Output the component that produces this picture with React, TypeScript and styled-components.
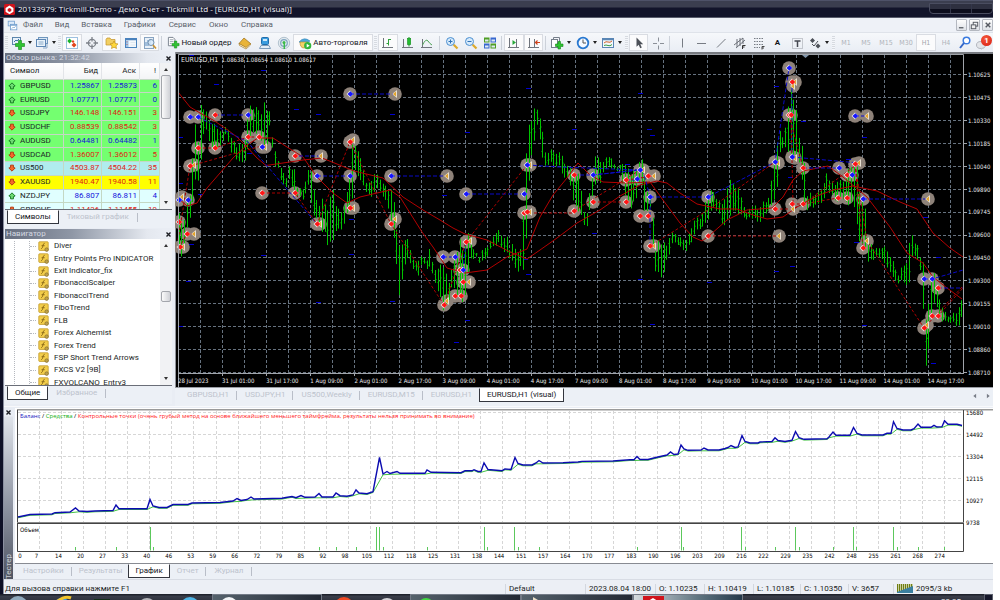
import React from "react";
import styled, { createGlobalStyle } from "styled-components";

const UI = `Roboto, "Open Sans", sans-serif`;
const TITLE = `"Open Sans", "Noto Sans", sans-serif`;
const SMALL = `"DejaVu Sans Condensed", "DejaVu Sans", sans-serif`;

const GlobalStyle = createGlobalStyle`
  * { box-sizing: border-box; }
  body { margin: 0; background: #fff; font-family: ${UI}; font-size: 8px; line-height: 10px; color: #1c1f26; }
  button, input { font: inherit; color: inherit; }
  button { border: 0; background: none; padding: 0; margin: 0; white-space: nowrap; }
  svg { display: block; }
`;

const Desktop = styled.div`
  display: flex;
  flex-direction: column;
  height: 100vh;
  overflow: hidden;
  padding-right: 7px;
`;

/* ---------- window frame ---------- */
const TitleBar = styled.header`
  display: flex;
  flex: none;
  align-items: center;
  justify-content: space-between;
  height: 18px;
  padding-left: 4px;
  background: linear-gradient(#4e5268 0 1px, #3b3e4f 1px 7px, #12142a 8px 17px, #585c6c 17px);
`;
const Caption = styled.h1`
  display: flex;
  align-items: center;
  gap: 3px;
  margin: 0;
  font-family: ${TITLE};
  font-size: 8px;
  font-weight: 400;
  color: #f2f3f7;
`;
const FrameButtons = styled.div`
  display: flex;
  width: 64px;
  height: 11px;
  margin-bottom: 2px;
  border: 1px solid #4a4d60;
  border-radius: 0 0 4px 4px;
  background: linear-gradient(#2e3040 0 5px, #0c0d1c 5px);
  overflow: hidden;
`;
const FrameButton = styled.button`
  flex: 1;
  border-right: 1px solid #33364a;
  &:last-child { border-right: 0; }
`;
const Frame = styled.div`
  display: flex;
  flex: none;
  flex-direction: column;
  padding-left: 4px;
  background: linear-gradient(90deg, #0e1026 0 3px, #8a8fa0 3px 4px, #e9edf4 4px);
`;
const MenuBar = styled.nav`
  display: flex;
  align-items: center;
  height: 14px;
  padding-left: 3px;
  background: #eef1f7;
`;
const MenuButton = styled.button<{ $gap?: number }>`
  margin-left: ${(p) => p.$gap ?? 12}px;
  color: #5a5f6a;
`;
const MdiButtons = styled.div`
  display: flex;
  gap: 2px;
  margin-left: auto;
`;
const MdiButton = styled.button`
  display: grid;
  place-items: center;
  width: 11px;
  height: 12px;
  border: 1px solid #b4b8c0;
  border-radius: 1px;
  background: linear-gradient(#fdfdfd, #dfe2e8);
`;

/* ---------- toolbar ---------- */
const Toolbar = styled.div`
  display: flex;
  align-items: center;
  height: 20px;
  border-top: 1px solid #dfe3ea;
  background: linear-gradient(#f6f8fb, #e9edf4);
  overflow: hidden;
`;
const Grip = styled.span`
  flex: none;
  width: 3px;
  height: 14px;
  margin: 0 1px;
  background: repeating-linear-gradient(#d6dae0 0 1px, #f4f6fa 1px 2px);
`;
const Rule = styled.span`
  flex: none;
  width: 1px;
  height: 14px;
  margin: 0 2px;
  background: #ccd1d9;
`;
const Tool = styled.button<{ $on?: boolean; $w?: number }>`
  display: flex;
  flex: none;
  align-items: center;
  justify-content: center;
  gap: 1px;
  width: ${(p) => p.$w ?? 19}px;
  height: 17px;
  border: 1px solid ${(p) => (p.$on ? "#d9dce2" : "transparent")};
  background: ${(p) => (p.$on ? "#fbfbfc" : "transparent")};
  color: ${(p) => (p.$on ? "#a3a5aa" : "#aeb2b9")};
`;
const TextTool = styled(Tool)`
  color: #14161c;
`;
const PeriodTool = styled(Tool)`
  font-family: ${SMALL};
  font-size: 7px;
`;
const Arrow = styled.span`
  flex: none;
  border: 2px solid transparent;
  border-top: 3px solid #222;
  border-bottom: 0;
  margin-left: 2px;
`;
const Notice = styled.button`
  position: relative;
  flex: none;
  width: 18px;
  height: 17px;
  margin-left: auto;
`;
const NoticeBadge = styled.span`
  position: absolute;
  top: 1px;
  right: 1px;
  width: 11px;
  height: 11px;
  border-radius: 50%;
  background: radial-gradient(circle at 40% 30%, #f4583c, #d81e12);
  color: #fff;
  font-weight: 700;
  line-height: 11px;
  text-align: center;
`;

/* ---------- docked panels ---------- */
const Work = styled.div`
  display: flex;
  align-items: flex-start;
`;
const Dock = styled.aside`
  flex: none;
  width: 168px;
  margin-right: 3px;
  padding-left: 1px;
`;
const PanelTitle = styled.div`
  display: flex;
  align-items: center;
  justify-content: space-between;
  height: 10px;
  margin-top: 1px;
  color: #d5d9e2;
  background: linear-gradient(90deg, #666e7f, #8f97a6 40%, #e4e8ef 85%, #e9edf4 95%);
`;
const PanelHeading = styled.h2`
  margin: 0 0 0 1px;
  font-size: 8px;
  font-weight: 400;
  line-height: 10px;
`;
const Close = styled.button`
  display: grid;
  place-items: center;
  width: 8px;
  height: 8px;
`;
const PanelBody = styled.div<{ $h: number }>`
  display: flex;
  align-items: stretch;
  height: ${(p) => p.$h}px;
  background: #fff;
  border-bottom: 1px solid #6a6e78;
  overflow: hidden;
`;
const Quotes = styled.table`
  flex: 1;
  height: 154px;
  border-collapse: collapse;
  table-layout: fixed;
`;
const HeadCell = styled.th<{ $w: number; $left?: boolean }>`
  width: ${(p) => p.$w}px;
  height: 16px;
  padding: 0 3px 0 5px;
  font-weight: 400;
  text-align: ${(p) => (p.$left ? "left" : "right")};
  border-right: 1px solid #e2e4e8;
  background: linear-gradient(#fff, #f3f4f6);
`;
const QuoteRow = styled.tr<{ $bg: string }>`
  background: ${(p) => p.$bg};
`;
const SymbolCell = styled.td`
  padding: 0 0 0 3px;
  border: 1px solid #c4d8c4;
  border-left: 0;
`;
const SymbolLabel = styled.span`
  display: flex;
  align-items: center;
  gap: 4px;
`;
const PriceCell = styled.td<{ $up: boolean }>`
  padding: 0 2px;
  border: 1px solid #c4d8c4;
  text-align: right;
  color: ${(p) => (p.$up ? "#1414dc" : "#e01c14")};
`;
const ScrollTrack = styled.div`
  display: flex;
  flex: none;
  flex-direction: column;
  align-items: center;
  width: 12px;
  padding: 5px 1px;
  background: #f1f2f4;
`;
const ScrollArrow = styled.span<{ $down?: boolean }>`
  border: 2px solid transparent;
  ${(p) => (p.$down ? "border-top: 3px solid #333; border-bottom: 0;" : "border-bottom: 3px solid #333; border-top: 0;")}
`;
const ScrollThumb = styled.span<{ $top: number; $h: number }>`
  width: 10px;
  height: ${(p) => p.$h}px;
  margin: ${(p) => p.$top}px 0 auto;
  border: 1px solid #a3a6ac;
  border-radius: 2px;
  background: linear-gradient(90deg, #fbfbfb, #cfd1d6);
`;
const Tabs = styled.div<{ $pad?: number; $h?: number }>`
  display: flex;
  align-items: flex-start;
  height: ${(p) => p.$h ?? 18}px;
  padding-left: ${(p) => p.$pad ?? 2}px;
  background: #ecf0f6;
`;
const Tab = styled.button<{ $on?: boolean; $pad?: number }>`
  height: 14px;
  padding: 0 ${(p) => p.$pad ?? 7}px;
  border: 1px solid ${(p) => (p.$on ? "#33363e" : "transparent")};
  border-top-color: transparent;
  background: ${(p) => (p.$on ? "#fff" : "transparent")};
  color: ${(p) => (p.$on ? "#14161c" : "#bdc3cd")};
`;
const TabRule = styled.span`
  width: 1px;
  height: 9px;
  margin: 3px 1px 0 0;
  background: #b9bec8;
`;
const Tree = styled.ul`
  display: grid;
  grid-auto-rows: 1fr;
  flex: 1;
  height: 149px;
  margin: 1px 0 0;
  padding: 0 0 0 9px;
  list-style: none;
  background: repeating-linear-gradient(#fff 0 1px, transparent 1px 2px), linear-gradient(90deg, transparent 9px, #b5b8be 9px 10px, transparent 10px 24px, #b5b8be 24px 25px, transparent 25px);
`;
const TreeItem = styled.li`
  display: flex;
  align-items: center;
  gap: 5px;
  padding-left: 16px;
  white-space: nowrap;
`;
const TreeTwig = styled.span`
  width: 6px;
  margin-right: -3px;
  border-top: 1px dotted #b5b8be;
`;

/* ---------- chart window ---------- */
const ChartColumn = styled.section`
  flex: 1;
  min-width: 0;
`;
const Plot = styled.svg`
  width: 100%;
  height: auto;
  font-family: ${SMALL};
  font-size: 6px;
`;
const Legend = styled.text`
  font-family: ${TITLE};
  font-size: 6px;
`;
const TabScroll = styled.div`
  display: flex;
  gap: 5px;
  margin: 4px 1px 0 auto;
`;

/* ---------- tester ---------- */
const Tester = styled.section`
  display: flex;
  border-top: 1px solid #f8f9fb;
  padding-top: 1px;
`;
const TesterRail = styled.div`
  display: flex;
  flex: none;
  flex-direction: column;
  align-items: center;
  justify-content: space-between;
  width: 9px;
  margin-right: 2px;
  background: linear-gradient(#e9edf4 8px, #dfe3ea 9px, #8a909e 60%, #4e5462);
`;
const RailName = styled.span`
  writing-mode: vertical-rl;
  transform: rotate(180deg);
  color: #c9cdd6;
  line-height: 9px;
`;
const TesterMain = styled.div`
  flex: 1;
  min-width: 0;
`;
const StatusBar = styled.footer`
  display: flex;
  align-items: center;
  height: 15px;
  padding: 4px 0 0 1px;
  border-top: 1px solid #d8dce4;
  background: #eceff5;
`;
const StatusHelp = styled.span`
  flex: 1;
  white-space: nowrap;
`;
const StatusItem = styled.span<{ $w: number }>`
  flex: none;
  display: flex;
  gap: 3px;
  width: ${(p) => p.$w}px;
  padding-left: 3px;
  border-left: 1px solid #d3d7de;
  white-space: nowrap;
`;

/* ---------- task bar ---------- */
const TaskBar = styled.div`
  display: flex;
  flex: 1;
  min-height: 7px;
  overflow: hidden;
  background: linear-gradient(#1f222c 0 1px, #3a3e4a 2px, #2f323d);
`;
const Task = styled.button<{ $w: number; $open?: boolean; $lit?: boolean }>`
  flex: none;
  width: ${(p) => p.$w}px;
  height: 20px;
  padding: 1px 0 0 ${(p) => (p.$open ? 8 : 0)}px;
  border: ${(p) => (p.$open ? "1px solid #737a86" : "0")};
  background: ${(p) => (p.$lit ? "linear-gradient(90deg, #d5dade, #5f7480 60%, #25394a)" : p.$open ? "linear-gradient(90deg, #55626c, #232833)" : "transparent")};
`;
const Clock = styled.span`
  margin: 3px 23px 0 auto;
  color: #e8eaef;
`;
const ShowDesktop = styled.button`
  width: 9px;
  height: 20px;
  border: 1px solid #5b5f6c;
  background: #15172a;
`;

/* ---------- icons ---------- */
const glyphs: Record<string, React.ReactNode> = {
  newChart: <><rect x="1.5" y="1.5" width="8" height="7" fill="#e7f1fa" stroke="#5d86ad" /><path d="M3 6l2-2 1 1 2-2" stroke="#3e73a8" fill="none" /><path d="M7.500 4.500h3V7.500h3v3h-3v3h-3v-3h-3v-3h3z" fill="#2fc431" stroke="#128817" strokeWidth=".6" /></>,
  profiles: <><rect x="3.500" y="1.500" width="9" height="6" fill="#d9e8f6" stroke="#6f96bd" /><rect x="1.500" y="3.500" width="9" height="7" fill="#e9f3fb" stroke="#5d86b4" /><path d="M3.500 6h5M3.500 8h5M8 12h4v-4" stroke="#8aa9c8" fill="none" /></>,
  market: <><rect x="1.500" y="1.500" width="11" height="11" fill="#fff" stroke="#9cc0e0" /><path d="M4.500 2.500L7 5 4.500 7.500 2.300 5z" fill="#19b32a" /><path d="M9 6.500L11.500 9 9 11.500 6.500 9zM8 4l1.500 1.500L8 7 6.500 5.500z" fill="#e2451c" /></>,
  cross: <g fill="none" stroke="#7d828a"><circle cx="7" cy="7" r="3.700" strokeWidth="1.200" /><path d="M7 1v4.500M7 8.500v4.500M1 7h4.500M8.500 7h4.500" strokeWidth="1.300" /></g>,
  nav: <><path d="M1 3.500L2 2h3l1 1.500h4V9H1z" fill="#f2cf62" stroke="#c2922a" strokeWidth=".7" /><path d="M9 5l1.300 2.500 2.700.4-2 1.900.5 2.700L9 11.200l-2.500 1.300.5-2.700-2-1.900 2.700-.4z" fill="#ffd83c" stroke="#b88713" strokeWidth=".6" /></>,
  terminal: <><rect x="1.500" y="2.500" width="11" height="9" fill="#f4f8fc" stroke="#4a82bd" /><path d="M1.500 3.500h11" stroke="#4a82bd" strokeWidth="1.500" /><path d="M2 4.500h2.500v6.500H2z" fill="#9cc4ea" /><path d="M3 5.500v.8M3 8v.8" stroke="#d04a3a" /><path d="M6.500 6.500h5M6.500 9h5" stroke="#dfe8f0" /></>,
  tester: <><rect x="1.500" y="1.500" width="9" height="11" fill="#e8f0f8" stroke="#88a4c2" /><path d="M3 10V6M5 10V4M7 8V3" stroke="#5b8dc0" /><circle cx="8" cy="6.500" r="3" fill="#d8ebfb" fillOpacity=".8" stroke="#7390ad" /><path d="M10 9l3 3.500" stroke="#cc9432" strokeWidth="1.700" /></>,
  order: <><path d="M1.500 1.500h5l2 2v7h-7z" fill="#fff" stroke="#767f8b" /><path d="M3 4h4M3 6h4M3 8h2" stroke="#9aa3ad" /><path d="M8 5.500h2.500V8H13v2.500h-2.500V13H8v-2.500H5.500V8H8z" fill="#2fc431" stroke="#128817" strokeWidth=".6" /></>,
  book: <><path d="M1 7.500L6 2l6.500 5.500L8 12z" fill="#e9b43a" stroke="#9a6b12" strokeWidth=".7" /><path d="M1 7.500L1.500 9.500 8 13l4.500-4v-1.500L8 11.500z" fill="#fff3cc" stroke="#9a6b12" strokeWidth=".6" /></>,
  vps: <><rect x="3.500" y="1.500" width="7" height="7" rx="1" fill="#3a9de0" stroke="#1f6cab" /><path d="M5 3h4v2H5z" fill="#cfe8f8" /><path d="M1.500 12.500L3 9.500h8l1.500 3z" fill="#e3edf6" stroke="#7d9cbb" /></>,
  signal: <><circle cx="7" cy="7" r="5.700" fill="#e2eaf0" stroke="#b2c2ce" /><circle cx="7" cy="7" r="3.300" fill="none" stroke="#7fa5c0" strokeWidth="1.200" /><circle cx="7" cy="6.500" r="1.500" fill="#3cba4a" /><path d="M7.300 7v6" stroke="#3cba4a" strokeWidth="1.500" /></>,
  auto: <><path d="M1 6Q6 0 12 5L7 8z" fill="#4ba9dc" stroke="#2a77aa" strokeWidth=".5" /><path d="M2 6h8q0 6-4 6T2 6z" fill="#f3d268" stroke="#af8424" strokeWidth=".6" /><circle cx="9.700" cy="9.700" r="3.600" fill="#32b53c" /><path d="M8.700 7.800v3.800l3-1.900z" fill="#fff" /></>,
  bars: <><path d="M2.500 2v10M1 11.500h11" stroke="#70757d" fill="none" /><path d="M5.500 7.500h2V3M7.500 3.500H10M7.500 5v4.500" stroke="#2fa13a" fill="none" /></>,
  candles: <><path d="M2.500 3v9M1 11.500h11" stroke="#70757d" fill="none" /><path d="M8 1v9.500" stroke="#15911f" /><rect x="6.500" y="2.500" width="3.200" height="6" fill="#22bd30" stroke="#15911f" strokeWidth=".6" /></>,
  line: <><path d="M2.500 3v9M1 11.500h11" stroke="#70757d" fill="none" /><path d="M2.500 9Q6 2 8 5t4 4" stroke="#4fa657" fill="none" /></>,
  zoomIn: <><circle cx="5.500" cy="5.500" r="4" fill="#d5eafb" stroke="#4c8fd0" /><path d="M3.500 5.500h4M5.500 3.500v4" stroke="#2f72b8" /><path d="M8.700 8.700L12.500 12.500" stroke="#dcaa2c" strokeWidth="2.200" /></>,
  zoomOut: <><circle cx="5.500" cy="5.500" r="4" fill="#d5eafb" stroke="#4c8fd0" /><path d="M3.500 5.500h4" stroke="#2f72b8" /><path d="M8.700 8.700L12.500 12.500" stroke="#dcaa2c" strokeWidth="2.200" /></>,
  tile: <><path d="M1 1.500h5.500v5H1zM7.500 7.500H13v5H7.500z" fill="#4f9e24" /><path d="M7.500 1.500H13v5H7.500zM1 7.500h5.500v5H1z" fill="#3868cf" /><path d="M2 3.500h3.500v2H2zM8.500 3.500H12v2H8.500zM2 9.500h3.500v2H2zM8.500 9.500H12v2H8.500z" fill="#dfeaf4" /></>,
  scroll: <><path d="M2.500 2v10M1 11.500h11M9.500 3v8" stroke="#70757d" fill="none" /><path d="M5.500 4l3.500 2.500L5.500 9z" fill="#27a838" /></>,
  shift: <><path d="M2.500 2v10M1 11.500h11M7.500 3v8" stroke="#70757d" fill="none" /><path d="M13 6.500H8.500M10.500 4.500l-2 2 2 2" stroke="#d0431c" fill="none" strokeWidth="1.200" /></>,
  indicators: <><rect x="1.500" y="3.500" width="6" height="8" fill="#fff" stroke="#767f8b" /><path d="M3.500 3.500v-2h6v7" stroke="#767f8b" fill="none" /><path d="M8 5.500h2.500V8H13v2.500h-2.500V13H8v-2.500H5.500V8H8z" fill="#2fc431" stroke="#128817" strokeWidth=".6" /></>,
  clock: <><circle cx="7" cy="7" r="5.300" fill="#f4f9ff" stroke="#2878d0" strokeWidth="1.800" /><path d="M7 3.500V7h3" stroke="#555" fill="none" /></>,
  template: <><rect x="1.500" y="2.500" width="11" height="9" fill="#f4f8fc" stroke="#5a86b5" /><path d="M1.500 3.500h11" stroke="#5a86b5" strokeWidth="1.500" /><path d="M3 7q2-2 4-1t4-1" stroke="#d0622c" fill="none" /><path d="M3 9.500q2-1 4 0t4-1" stroke="#3a9e48" fill="none" /></>,
  cursor: <path d="M4.500 1.500v9.300l2.200-2 1.500 3.500 1.600-.7-1.500-3.300h2.900z" fill="#4d5158" />,
  plus: <path d="M7.500 1.500v4M7.500 9.500v4M2 7.500h4M9 7.500h4" stroke="#8b9098" />,
  vline: <path d="M7.500 2.500v9" stroke="#777c84" />,
  hline: <path d="M3 7.500h9" stroke="#777c84" />,
  trend: <path d="M3 11.500L11.500 3" stroke="#777c84" />,
  channel: <><path d="M1 9l9-7M3 12l9-8M4 3v8M7 2v8M10 2v6" stroke="#5f636b" fill="none" strokeWidth=".9" /><path d="M9.500 13V9.500h3M9.500 11h2" stroke="#333" fill="none" /></>,
  fibo: <><path d="M2 2.500h10M2 5.500h10M2 8.500h10M2 11.500h6" stroke="#777c84" strokeDasharray="1.500 1" /><path d="M10 13.500V10.500h2.500M10 12h2" stroke="#444" fill="none" /></>,
  label: <><rect x="2.500" y="2.500" width="10" height="10" fill="none" stroke="#999da5" strokeDasharray="1 1" /><path d="M4.500 5h6M7.500 5v6" stroke="#444850" strokeWidth="1.500" /></>,
  arrows: <><path d="M2 4.500L4.500 2 7 4.500 4.500 7zM7.500 10l2.500-2.500 2.500 2.500-2.500 2.500z" fill="#4c5058" /><path d="M4 8l2 2 4-5" stroke="#4c5058" fill="none" /></>,
  search: <><circle cx="8.500" cy="4.500" r="3.300" fill="#fff" stroke="#3a7be0" strokeWidth="1.500" /><path d="M6 7l-4 5" stroke="#3467c8" strokeWidth="2" /></>,
  window: <><rect x="1.500" y="1.500" width="8" height="6" fill="#dceafa" stroke="#6e9ccc" /><rect x="4.500" y="5.500" width="8" height="7" fill="#fff" stroke="#6e9ccc" /><path d="M4.500 6.500h8" stroke="#6e9ccc" strokeWidth="1.500" /><path d="M6 11l2-2 1 1 2-2" stroke="#6e9ccc" fill="none" /></>,
  logo: <><rect width="14" height="14" rx="2" fill="#d0141c" /><path d="M7 2L12 5v5l-5 3-5-3V5z" fill="#fff" /><path d="M7 5l2.300 1.300v2.600L7 10.200 4.700 8.900V6.300z" fill="#d0141c" /></>,
  script: <><rect x="1" y="1" width="12" height="11" rx="1" fill="#f2cd4a" stroke="#c19a2c" /><path d="M8.500 3Q6.500 3 6.300 6T4 10M4.500 6h4" stroke="#7a5a10" fill="none" /><circle cx="11" cy="11" r="2.300" fill="#bfa14a" stroke="#806a2c" strokeWidth=".8" /></>,
  up: <path d="M7 1.500L12.500 7 9.500 8v4h-5V8L1.500 7z" fill="#6fdc74" stroke="#187a24" strokeWidth="1.700" />,
  down: <path d="M7 12.500L12.500 7l-3-1V2h-5v4l-3 1z" fill="#f5682c" stroke="#b5380f" strokeWidth="1.700" />,
  close: <path d="M3 3l8 8M11 3l-8 8" stroke="#1b1d22" strokeWidth="2.800" />,
  closeGray: <path d="M3 3l8 8M11 3l-8 8" stroke="#565a62" strokeWidth="2.500" />,
  minimize: <path d="M3 10.500h7" stroke="#565a62" strokeWidth="2" />,
  restore: <><rect x="5" y="2" width="7" height="6" fill="none" stroke="#565a62" strokeWidth="1.500" /><rect x="2" y="6" width="7" height="6" fill="#eee" stroke="#565a62" strokeWidth="1.500" /></>,
  bubble: <><ellipse cx="6" cy="9" rx="4.500" ry="3.500" fill="#e3e5e9" stroke="#b2b6be" /><path d="M6 12v2l3-2.500z" fill="#c3c6cc" /></>,
  left: <path d="M9 3v8L4 7z" fill="#777c86" />,
  right: <path d="M5 3v8l5-4z" fill="#777c86" />,
};
function Icon({ name, size = 14 }: { name: string; size?: number }) {
  return (
    <svg width={size} height={size} viewBox="0 0 14 14" aria-hidden="true">
      {glyphs[name]}
    </svg>
  );
}
function T({ name, on, w, drop }: { name: string; on?: boolean; w?: number; drop?: boolean }) {
  return (
    <Tool $on={on} $w={w} aria-label={name}>
      <Icon name={name} />
      {drop && <Arrow />}
    </Tool>
  );
}

/* ---------- data ---------- */
const GREEN = "#74ff70";
const quotes: [string, string, string, string, boolean, string][] = [
  ["GBPUSD", "1.25867", "1.25873", "6", true, GREEN],
  ["EURUSD", "1.07771", "1.07771", "0", true, GREEN],
  ["USDJPY", "146.148", "146.151", "3", false, GREEN],
  ["USDCHF", "0.88539", "0.88542", "3", false, GREEN],
  ["AUDUSD", "0.64481", "0.64482", "1", true, GREEN],
  ["USDCAD", "1.36007", "1.36012", "5", false, GREEN],
  ["US500", "4503.87", "4504.22", "35", false, "#b0ecee"],
  ["XAUUSD", "1940.47", "1940.58", "11", false, "#ffff00"],
  ["NZDJPY", "86.807", "86.811", "4", true, "#e0ffff"],
  ["GBPCHF", "1.11436", "1.11455", "19", false, "#e0ffff"],
];
const indicators = ["Diver", "Entry Points Pro INDICATOR", "Exit Indicator_fix", "FibonacciScalper", "FibonacciTrend", "FiboTrend", "FLB", "Forex Alchemist", "Forex Trend", "FSP Short Trend Arrows", "FXCS V2 [9B]", "FXVOLCANO_Entry3"];
const prices = ["1.10625", "1.10475", "1.10330", "1.10185", "1.10040", "1.09890", "1.09745", "1.09600", "1.09450", "1.09300", "1.09155", "1.09010", "1.08860", "1.08710"];
const dates = ["28 Jul 2023", "31 Jul 01:00", "31 Jul 17:00", "1 Aug 09:00", "2 Aug 01:00", "2 Aug 17:00", "3 Aug 09:00", "4 Aug 01:00", "4 Aug 17:00", "7 Aug 09:00", "8 Aug 01:00", "8 Aug 17:00", "9 Aug 09:00", "10 Aug 01:00", "10 Aug 17:00", "11 Aug 09:00", "14 Aug 01:00", "14 Aug 17:00"];

/* x, high, low along the price series */
const range = [
  179,215,250, 181,220,259, 184,222,250, 187,205,230, 190,196,218, 192,170,208, 195,120,180, 198,150,183, 200,97,165, 203,115,145, 205,103,120, 208,118,137, 211,127,150, 214,120,144, 217,130,150, 222,132,143, 225,128,134, 228,128,138, 230,133,149, 233,140,153, 236,147,157, 239,146,163, 242,145,163, 245,140,160, 247,128,155, 250,105,140, 253,108,130, 256,108,135, 259,110,130, 262,113,140, 265,101,150, 267,110,145, 270,113,127, 273,140,150, 275,148,165, 278,162,168, 281,168,180, 284,172,183, 286,182,190, 289,166,178, 292,168,185, 295,170,192, 298,190,196, 303,190,200, 306,180,192, 309,170,185, 312,172,208, 315,195,217, 319,208,222, 322,196,230, 325,205,232, 328,210,245, 333,188,242, 336,205,230, 340,212,230, 343,212,229, 346,195,215, 349,190,212, 352,142,205, 355,146,170, 358,150,175, 361,160,182, 364,172,186, 367,184,192, 371,184,199, 375,172,190, 379,178,189, 383,182,195, 388,190,205, 393,192,232, 396,222,250, 399,247,299, 401,248,290, 404,240,266, 407,237,258, 410,248,262, 415,263,270, 419,260,275, 423,257,262, 427,260,268, 430,250,268, 434,268,276, 438,270,292, 441,264,297, 444,266,310, 449,283,300, 453,267,285, 457,253,293, 460,240,300, 463,250,302, 467,238,290, 470,230,258, 473,245,258, 476,253,256, 480,257,263, 483,250,262, 488,246,255, 492,240,247, 495,232,245, 499,231,243, 502,236,248, 507,237,253, 510,250,258, 513,245,263, 517,252,272, 522,250,266, 525,175,273, 528,125,195, 531,127,160, 534,106,143, 537,110,125, 539,112,127, 542,127,157, 546,155,167, 550,150,162, 553,152,165, 559,153,165, 562,155,173, 567,167,178, 570,165,180, 572,175,200, 575,180,205, 578,168,210, 580,180,211, 584,212,225, 587,212,225, 589,200,215, 592,178,200, 594,153,185, 597,157,180, 600,160,185, 603,165,175, 606,158,170, 609,156,165, 612,160,170, 615,165,169, 620,166,171, 625,162,192, 631,175,208, 637,170,198, 641,155,172, 644,170,210, 647,190,212, 650,192,202, 653,215,245, 656,250,270, 659,240,273, 661,245,275, 663,240,282, 666,250,262, 669,238,256, 673,233,243, 677,235,242, 680,238,247, 685,240,251, 688,236,247, 693,225,240, 697,218,230, 700,218,228, 703,214,228, 706,200,222, 709,193,217, 713,190,207, 718,200,210, 724,205,229, 730,178,215, 735,190,210, 738,184,212, 743,205,217, 748,212,218, 753,205,218, 758,210,222, 763,203,220, 768,202,210, 773,175,205, 777,143,190, 779,130,155, 783,137,147, 787,125,150, 790,83,155, 793,100,160, 796,104,155, 799,135,160, 801,145,167, 804,150,205, 807,195,209, 810,193,207, 815,198,207, 820,190,203, 824,185,200, 827,173,190, 830,180,192, 835,185,200, 838,180,200, 843,182,198, 848,170,207, 853,165,200, 857,165,223, 860,190,240, 863,200,245, 866,210,250, 868,235,260, 872,248,260, 877,250,258, 882,247,258, 885,248,265, 890,255,270, 893,262,278, 898,275,282, 903,265,280, 907,265,287, 910,240,282, 912,233,255, 915,245,257, 918,245,260, 921,258,270, 924,265,320, 926,320,366, 928,310,358, 932,275,310, 935,272,300, 938,295,312, 942,305,320, 947,317,323, 950,316,321, 953,314,322, 957,313,326, 960,303,323, 963,300,315,
];
const bars: [number, number, number][] = [];
for (let x = 179, k = 0, i = 0; x < 963; x += 2.757, i++) {
  while (k < range.length - 6 && range[k + 3] <= x) k += 3;
  const t = Math.min(1, Math.max(0, (x - range[k]) / (range[k + 3] - range[k])));
  const jitter = ((i * 37) % 11) / 3 - 1.7;
  bars.push([Math.floor(x) + 0.5, range[k + 1] + t * (range[k + 4] - range[k + 1]) + jitter, range[k + 2] + t * (range[k + 5] - range[k + 2]) + jitter]);
}
const barPath = bars
  .map(([x, h, l], i) => {
    const o = h + (l - h) * (0.2 + ((i * 7) % 5) * 0.14);
    const c = h + (l - h) * (0.25 + ((i * 3) % 4) * 0.16);
    return `M${x} ${h.toFixed(1)}V${l.toFixed(1)}M${x - 1} ${o.toFixed(1)}h1M${x} ${c.toFixed(1)}h1`;
  })
  .join("");

const slowMa = "178,92 190,107 200,113 213,120 225,128 237,137 247,147 257,158 266,165.5 283,163 303,160 322,158 337,164 354,171 383,178 403,197 423,210 440,220 453,228 465,234 487,240 510,252 527,259 540,250 557,238 577,223 600,210 620,196 640,185 657,181 667,183 680,193 697,204 720,209 737,209 753,215 767,219 783,217 797,207 817,196 833,190 853,186 877,191 900,202 917,209 933,233 950,248 963,257";
const fastMa = "178,198 187,206 197,203 207,188 220,173 233,158 247,145 258,138 273,138 287,147 303,157 317,177 333,193 347,203 360,197 377,193 390,190 400,197 410,213 422,232 433,247 447,268 465,273 487,270 507,257 527,249 540,217 553,195 567,178 578,163 590,175 603,182 627,183 650,182 663,200 680,223 693,237 702,241 710,235 727,220 747,210 772,208 783,197 793,180 803,171 828,166 843,177 867,197 890,227 907,253 923,263 933,277 947,288 962,299";

const marks: [string, number, number][] = [
  ["B",190,117],["B",198,117],["R",215,115],["B",248,115],["R",198,148],["R",215,148],["Y",194,165],["R",190,166],["R",248,137],["R",259,137],["Y",265,147],["B",262,147],
  ["Y",182,197],["B",179,200],["B",188,200],["R",179,222],["Y",194,234],["R",187,234],["Y",183,247],["R",180,247],["R",295,156],["Y",321,156],["B",317,176],["B",350,176],["R",262,193],["R",295,193],
  ["B",350,94],["Y",395,94],["Y",353,140],["R",350,142],["B",391,176],["Y",447,176],["Y",353,208],["R",350,208],["Y",320,224],["R",317,224],["Y",395,219],["R",391,224],
  ["B",443,257],["B",455,257],["Y",470,241],["R",466,242],["R",460,270],["B",463,270],["Y",469,282],["R",463,282],["R",455,296],["R",461,296],["Y",447,301],["R",444,305],
  ["B",466,194],["B",524,194],["Y",530,165],["B",527,165],["R",524,213],["Y",530,212],["R",527,212],["R",574,175],["B",593,175],["R",574,211],["R",593,202],["R",626,180],["B",637,179],["Y",643,170],["B",640,170],["Y",654,176],["R",648,176],["R",626,202],["B",650,197],["R",640,216],["R",648,216],["Y",654,246],["R",650,246],["B",708,197],["R",708,236],
  ["B",789,68],["Y",793,86],["Y",795,82],["R",792,82],["R",789,115],["R",791,115],["Y",795,158],["B",792,157],["Y",778,163],["B",775,162],["R",803,168],["B",839,168],["R",847,175],["B",852,175],["Y",859,163],["R",855,164],["R",838,198],["R",847,198],["B",863,199],["Y",928,199],["B",855,116],["Y",867,116],
  ["R",775,209],["Y",793,209],["R",792,204],["R",803,204],["Y",779,236],["Y",867,241],["R",863,248],["B",924,279],["B",932,279],["R",938,288],["R",932,316],["R",938,316],["Y",927,325],["R",924,328],
];
const pins = [264,70,217,84,297,109,319,114,393,114,192,55,181,137,181,183,201,194,250,153,445,195,352,219,192,244,264,255,352,254,189,281,319,302,393,301,181,326,468,320,457,342,529,88,641,93,468,132,575,129,650,129,653,135,628,164,595,233,529,274,641,279,710,282,653,324,526,259,777,86,804,121,865,137,791,177,926,217,840,229,857,242,939,257,793,266,777,271,865,325,934,363,849,159];
const pinPath = pins.map((v, i) => (i % 2 ? "" : `M${v - 3} ${pins[i + 1]}.5h5`)).join("");
const buys = "M190 117H198M215 115H248M350 94H395M179 200H188M321 156H295M317 176H350M391 176H447M443 257H455M466 194H524M527 165L560 167L640 170M574 175H593L640 170M593 175L637 170M626 180H637M650 197H708L775 162L789 68M650 197L643 170M792 157L859 163M792 82V157M803 168H839M847 175H852M863 199H928M855 116H867M924 279H932L963 270M938 288H963M198 117L248 142L262 160L317 224M463 270L466 242M650 246L650 197";
const sells = "M198 148H215L248 137H259M190 166L265 145M178 240L190 166M179 248L187 234H194M262 193H295L317 224L350 142L391 224L444 305L466 242L527 165M350 208H353M524 213H574M593 202H626M574 211L640 170M626 180L654 176M640 216H648M650 246L708 210L775 162M708 236H779M775 209H792L803 204L859 163M789 115L803 168M838 198H847M791 115L793 204M855 164L867 241L924 328L963 286M932 316H938L963 288M855 164L863 248M792 204H803L838 198";

const balance: [number, number][] = [
  [18,517],[30,514.5],[52,514],[55,512.7],[70,512],[75.5,508],[79,511],[87,511.5],[95,511],[113,510.5],[116,505],[119,508.7],[147,508.7],[150,499.5],[153,506],[159,507.5],[167,507.5],[173,504.5],[188,504.5],[192,503],[220,502.5],[233,501],[237,498.5],[241,500.5],[247,499.5],[251,497],[254,499],[282,498.3],[286,497.5],[292,496.5],[296,497.7],[301,495.5],[305,497.3],[315,497],[319,493.5],[322,497],[333,497],[336,493],[340,495.7],[347,496.3],[353,495],[356,490],[359,493],[367,493.7],[373,491.7],[379.5,457.5],[383,474],[387,471.5],[390,473.5],[397,471.5],[400,473.3],[425,473.3],[427,470],[431,472.3],[461,472.7],[465,470.8],[472,470.8],[474,469.7],[478,471.5],[481,471.5],[484,462.8],[488,469.5],[502,470.7],[505,469],[511,469.4],[515,457.5],[518,463.5],[523,465],[532,465],[536,463],[539,460.5],[543,463],[563,462.7],[578,462],[582,461.4],[613,461],[630,459.7],[634,459.7],[637,456.5],[640,459.5],[648,459.5],[658,457],[667,455],[670.5,452],[674,454.5],[678,454],[681,445],[684,449],[688,450.3],[701,450],[704,448],[708,450],[719,450],[725,448.5],[728,447.5],[731,445.5],[735,447.5],[738,447],[742,435.5],[745,441.5],[750,443],[758,443],[760,442],[772,441.5],[775,437.7],[778,440.5],[785,441.5],[792,440.3],[795.5,431.5],[799,437.7],[804,439.3],[827,438.7],[829,437],[833,432],[836,435.3],[850,435.3],[853.5,427.5],[857,433.3],[862,435],[883,435],[887,433.3],[891,433.3],[893.5,421.7],[897,428.5],[903,430],[911,430],[914,428.7],[918,424],[921,427.3],[931,427.3],[934,425.3],[937,427],[942,426.7],[944.5,420.8],[948,424.3],[957,424.3],[962,425.5],
];
/* equity follows the balance but skips its short spikes */
const equity = balance.filter(([, y], i) => {
  const a = balance[i - 1], b = balance[i + 1];
  return !a || !b || !(a[1] - y > 1.5 && b[1] - y > 1.5);
});
const tallLots = [150, 376, 379, 484, 514, 681, 741, 795, 853, 893];
const smallLots = [75, 116, 153, 319, 336, 356, 383, 427, 487, 518, 539, 637, 683, 745, 775, 799, 833, 856, 897, 918, 944];
const deals = [0, 7, 14, 20, 27, 33, 40, 46, 53, 59, 66, 72, 79, 85, 92, 98, 105, 112, 118, 125, 131, 138, 144, 151, 157, 164, 170, 177, 183, 190, 196, 203, 209, 216, 222, 229, 235, 242, 248, 255, 261, 268, 274];

function Mark({ kind, x, y }: { kind: string; x: number; y: number }) {
  if (kind === "Y")
    return <><path d={`M${x - 3} ${y}L${x + 2} ${y - 4}V${y + 4}z`} fill="#e8dfd0" /><path d={`M${x - 2} ${y}L${x + 1} ${y - 2.5}V${y + 2.5}z`} fill="#e2a32c" /></>;
  return <><path d={`M${x - 3.5} ${y}L${x} ${y - 3.5}L${x + 3.5} ${y}L${x} ${y + 3.5}z`} fill="#efe9e6" /><path d={`M${x - 2.5} ${y}L${x + 0.5} ${y - 2.8}L${x + 3.3} ${y}L${x + 0.5} ${y + 2.8}z`} fill={kind === "B" ? "#1414ff" : "#ff1414"} /></>;
}

function PriceChart() {
  return (
    <Plot viewBox="175 52 818 336" role="img" aria-label="EURUSD H1">
      <rect x="175" y="52" width="818" height="336" fill="#000" />
      <path d="M175 53H993" stroke="#777a80" strokeWidth="2" />
      <path d="M175.500 52V388" stroke="#8f9299" />
      <path d="M175 387.500H993" stroke="#9a9da4" />
      <g stroke="#66727f" strokeDasharray="3 2">
        {Array.from({ length: 35 }, (_, i) => <path key={i} d={`M${Math.round(200 + i * 22.06)}.5 55V373`} />)}
        {prices.map((p, i) => <path key={p} d={`M178 ${Math.round(74.2 + i * 22.9)}.5H963`} />)}
      </g>
      <g fill="#8e8279">
        {marks.map(([, x, y], i) => <circle key={i} cx={x} cy={y} r="6.800" />)}
      </g>
      <path d={pinPath} stroke="#0000d0" />
      <path d={barPath} stroke="#00c400" fill="none" />
      <polyline points={slowMa} fill="none" stroke="#b40000" />
      <polyline points={fastMa} fill="none" stroke="#b40000" />
      <path d={buys} fill="none" stroke="#0a0ac8" strokeDasharray="4 2" />
      <path d={sells} fill="none" stroke="#a80000" strokeDasharray="3 2" />
      {marks.map(([k, x, y], i) => <Mark key={i} kind={k} x={x} y={y} />)}
      <path d="M178.500 388V54.500H963.500V374M178 373.500H964" fill="none" stroke="#a0a4aa" />
      <path d="M802 55h7l-3.500 3z" fill="#8095aa" />
      <g fill="#e8e8e8">
        <text x="181" y="62"><tspan fontSize="7">EURUSD,H1</tspan>&#160; 1.08638 1.08654 1.08610 1.08617</text>
        {prices.map((p, i) => <text key={p} x="968" y={77 + i * 22.9}>{p}</text>)}
        {dates.map((d, i) => <text key={d} x={178 + i * 44.1} y="383">{d}</text>)}
      </g>
      <path d={dates.map((_, i) => `M${Math.round(178 + i * 44.1)}.5 374v2`).join("") + prices.map((_, i) => `M964 ${Math.round(74.2 + i * 22.9)}.5h3`).join("")} stroke="#a0a4aa" />
    </Plot>
  );
}

function TesterGraph() {
  return (
    <Plot viewBox="15 408 978 156" role="img" aria-label="Баланс и средства">
      <rect x="15" y="408" width="978" height="156" fill="#fff" />
      <path d="M17 409.800H993" stroke="#9a9a9a" strokeWidth="1.500" />
      <g stroke="#d6d6d6" strokeDasharray="3 2">
        {Array.from({ length: 42 }, (_, i) => <path key={i} d={`M${Math.round(39 + i * 22.07)}.5 411V552`} />)}
        {[412, 434, 456, 478, 500].map((y) => <path key={y} d={`M18 ${y}.5H963`} />)}
      </g>
      <path d="M17.500 410V551.500H963.500V410M17 523.500H964" fill="none" stroke="#444" />
      <path d="M17 522.500H964" stroke="#888" />
      <polyline points={equity.map((p) => `${p[0]},${p[1] + 0.8}`).join(" ")} fill="none" stroke="#43c443" />
      <polyline points={balance.map((p) => p.join()).join(" ")} fill="none" stroke="#0c0cb0" strokeWidth="1.400" />
      <path d={tallLots.map((x) => `M${x}.5 527V550.5`).join("") + smallLots.map((x) => `M${x}.5 547V550.5`).join("")} stroke="#5cc85c" />
      <Legend x="20" y="418">
        <tspan fill="#1818c0">Баланс</tspan> / <tspan fill="#12b012">Средства</tspan> / <tspan fill="#ff2020">Контрольные точки (очень грубый метод на основе ближайшего меньшего таймфрейма, результаты нельзя принимать во внимание)</tspan>
      </Legend>
      <text x="20" y="532">Объем</text>
      <g textAnchor="middle">
        {deals.map((d, i) => <text key={d} x={i === 0 ? 20 : 14.5 + i * 22.03} y="558">{d}</text>)}
      </g>
      {["15680", "14492", "13304", "12115", "10927", "9738"].map((v, i) => <text key={v} x="966" y={415 + i * 22.08}>{v}</text>)}
      <path d="M15 563.500H993" stroke="#888b92" />
    </Plot>
  );
}

const menu = ["Файл", "Вид", "Вставка", "Графики", "Сервис", "Окно", "Справка"];
const chartTabs = ["GBPUSD,H1", "USDJPY,H1", "US500,Weekly", "EURUSD,M15", "EURUSD,H1"];

export default function App() {
  return (
    <Desktop>
      <GlobalStyle />
      <TitleBar>
        <Caption><Icon name="logo" size={11} />20133979: Tickmill-Demo - Демо Счет - Tickmill Ltd - [EURUSD,H1 (visual)]</Caption>
        <FrameButtons>
          <FrameButton aria-label="Свернуть" /><FrameButton aria-label="Развернуть" /><FrameButton aria-label="Закрыть" />
        </FrameButtons>
      </TitleBar>
      <Frame>
        <MenuBar>
          <Icon name="window" size={11} />
          {menu.map((m, i) => <MenuButton key={m} $gap={i === 0 ? 5 : i > 3 ? 13 : 12}>{m}</MenuButton>)}
          <MdiButtons>
            <MdiButton aria-label="Свернуть окно"><Icon name="minimize" size={9} /></MdiButton>
            <MdiButton aria-label="Восстановить окно"><Icon name="restore" size={9} /></MdiButton>
            <MdiButton aria-label="Закрыть окно"><Icon name="closeGray" size={8} /></MdiButton>
          </MdiButtons>
        </MenuBar>
        <Toolbar>
          <Grip />
          <T name="newChart" w={24} drop /><T name="profiles" w={24} drop />
          <Grip />
          <T name="market" on w={20} /><T name="cross" w={20} /><T name="nav" on /><T name="terminal" /><T name="tester" on />
          <Rule />
          <TextTool $w={71}><Icon name="order" size={13} />Новый ордер</TextTool>
          <T name="book" w={20} /><T name="vps" /><T name="signal" />
          <TextTool $w={80} $on><Icon name="auto" />Авто-торговля</TextTool>
          <Grip />
          <T name="bars" on w={20} /><T name="candles" /><T name="line" w={20} />
          <Rule />
          <T name="zoomIn" /><T name="zoomOut" /><T name="tile" />
          <Rule />
          <T name="scroll" on w={20} /><T name="shift" on />
          <Rule />
          <T name="indicators" w={25} drop /><T name="clock" w={26} drop /><T name="template" w={25} drop />
          <Grip />
          <T name="cursor" on /><T name="plus" />
          <Rule />
          <T name="vline" /><T name="hline" w={20} /><T name="trend" /><T name="channel" /><T name="fibo" />
          <TextTool><b>A</b></TextTool>
          <T name="label" /><T name="arrows" w={25} drop />
          <Grip />
          {["M1", "M5", "M15", "M30", "H1", "H4"].map((p) => <PeriodTool key={p} $w={20} $on={p === "H1"}>{p}</PeriodTool>)}
          <T name="search" w={18} />
          <Notice aria-label="Уведомления"><Icon name="bubble" /><NoticeBadge>1</NoticeBadge></Notice>
        </Toolbar>
        <Work>
          <Dock>
            <PanelTitle><PanelHeading>Обзор рынка: 21:32:42</PanelHeading><Close aria-label="Закрыть"><Icon name="close" size={7} /></Close></PanelTitle>
            <PanelBody $h={147}>
              <Quotes>
                <thead>
                  <tr><HeadCell $w={59} $left>Символ</HeadCell><HeadCell $w={38}>Бид</HeadCell><HeadCell $w={38}>Аск</HeadCell><HeadCell $w={20}>!</HeadCell></tr>
                </thead>
                <tbody>
                  {quotes.map(([s, b, a, n, up, bg]) => (
                    <QuoteRow key={s} $bg={bg}>
                      <SymbolCell><SymbolLabel><Icon name={up ? "up" : "down"} size={8} />{s}</SymbolLabel></SymbolCell>
                      <PriceCell $up={up}>{b}</PriceCell><PriceCell $up={up}>{a}</PriceCell><PriceCell $up={up}>{n}</PriceCell>
                    </QuoteRow>
                  ))}
                </tbody>
              </Quotes>
              <ScrollTrack><ScrollArrow /><ScrollThumb $top={4} $h={44} /><ScrollArrow $down /></ScrollTrack>
            </PanelBody>
            <Tabs role="tablist">
              <Tab role="tab" $on>Символы</Tab><Tab role="tab">Тиковый график</Tab><TabRule />
            </Tabs>
            <PanelTitle><PanelHeading>Навигатор</PanelHeading><Close aria-label="Закрыть"><Icon name="close" size={7} /></Close></PanelTitle>
            <PanelBody $h={147}>
              <Tree>
                {indicators.map((n) => <TreeItem key={n}><TreeTwig /><Icon name="script" size={11} />{n}</TreeItem>)}
              </Tree>
              <ScrollTrack><ScrollArrow /><ScrollThumb $top={44} $h={11} /><ScrollArrow $down /></ScrollTrack>
            </PanelBody>
            <Tabs role="tablist">
              <Tab role="tab" $on>Общие</Tab><Tab role="tab">Избранное</Tab><TabRule />
            </Tabs>
          </Dock>
          <ChartColumn>
            <PriceChart />
            <Tabs role="tablist" $pad={5}>
              {chartTabs.map((t, i) => <React.Fragment key={t}>{i > 0 && <TabRule />}<Tab role="tab" $pad={6}>{t}</Tab></React.Fragment>)}
              <Tab role="tab" $on>EURUSD,H1 (visual)</Tab>
              <TabScroll><Close aria-label="Назад"><Icon name="left" size={8} /></Close><Close aria-label="Вперёд"><Icon name="right" size={8} /></Close></TabScroll>
            </Tabs>
          </ChartColumn>
        </Work>
        <Tester>
          <TesterRail><Close aria-label="Закрыть тестер"><Icon name="close" size={7} /></Close><RailName>Тестер</RailName></TesterRail>
          <TesterMain>
            <TesterGraph />
            <Tabs role="tablist" $pad={1} $h={15}>
              <Tab role="tab" $pad={6}>Настройки</Tab><TabRule /><Tab role="tab" $pad={5}>Результаты</Tab><Tab role="tab" $on $pad={6}>График</Tab><Tab role="tab" $pad={6}>Отчет</Tab><TabRule /><Tab role="tab" $pad={6}>Журнал</Tab><TabRule />
            </Tabs>
          </TesterMain>
        </Tester>
        <StatusBar>
          <StatusHelp>Для вызова справки нажмите F1</StatusHelp>
          <StatusItem $w={80}>Default</StatusItem>
          <StatusItem $w={70}>2023.08.04 18:00</StatusItem>
          <StatusItem $w={49}>O: 1.10235</StatusItem>
          <StatusItem $w={49}>H: 1.10419</StatusItem>
          <StatusItem $w={47}>L: 1.10185</StatusItem>
          <StatusItem $w={48}>C: 1.10350</StatusItem>
          <StatusItem $w={45}>V: 3657</StatusItem>
          <StatusItem $w={100}>
            <svg width="16" height="9" viewBox="0 0 16 9" aria-hidden="true">
              <path d="M0 0h16v9H0z" fill="#c9cfa0" />
              <path d="M.5 0v9M2.500 0v9M4.500 0v9M6.500 0v9M8.500 0v9M10.500 0v9M12.500 0v9M14.500 0v9" stroke="#6f7d12" />
              <path d="M0 9V8L16 2v7z" fill="#3b7fa0" />
            </svg>
            2095/3 kb
          </StatusItem>
        </StatusBar>
      </Frame>
      <TaskBar>
        <Task $w={44} aria-label="Пуск"><svg width="36" height="20"><circle cx="18" cy="11" r="10" fill="#8fa9bd" /><circle cx="18" cy="13" r="8" fill="#c4d8e6" /></svg></Task>
        <Task $w={40} aria-label="Браузер"><svg width="40" height="20"><circle cx="18" cy="12" r="9" fill="#3a9ae0" /><path d="M10 9Q20 0 27 3" stroke="#f3c52c" strokeWidth="3" fill="none" /></svg></Task>
        <Task $w={44} aria-label="Проводник"><svg width="40" height="20"><rect x="10" y="4" width="16" height="16" fill="#16301a" /></svg></Task>
        <Task $w={42} aria-label="Диск"><svg width="40" height="20"><circle cx="19" cy="12" r="9" fill="#b4b6ba" /></svg></Task>
        <Task $w={42} aria-label="Почта"><svg width="40" height="20"><circle cx="20" cy="12" r="10" fill="#4fb5e6" /></svg></Task>
        <Task $w={110} $open aria-label="Skype"><svg width="20" height="20"><circle cx="8" cy="10" r="9" fill="#f2f4f6" /></svg></Task>
        <Task $w={44} aria-label="Opera"><svg width="44" height="20"><circle cx="22" cy="12" r="10" fill="#f04a24" /></svg></Task>
        <Task $w={44} aria-label="Chrome"><svg width="44" height="20"><circle cx="21" cy="12" r="9" fill="#d4d4d8" /></svg></Task>
        <Task $w={111} $open aria-label="Торрент"><svg width="20" height="20"><circle cx="7" cy="10" r="8" fill="#43d943" /></svg></Task>
        <Task $w={112} $open aria-label="Блокнот"><svg width="20" height="20"><path d="M3 1l10 6v12H3z" fill="#eadfc8" /></svg></Task>
        <Task $w={110} $open $lit aria-label="Tickmill"><svg width="24" height="20"><rect x="1" width="21" height="20" fill="#d0141c" /><path d="M11 2l8 5v9H3V7z" fill="#fff" /></svg></Task>
        <Clock>23:35</Clock>
        <ShowDesktop aria-label="Показать рабочий стол" />
      </TaskBar>
    </Desktop>
  );
}
